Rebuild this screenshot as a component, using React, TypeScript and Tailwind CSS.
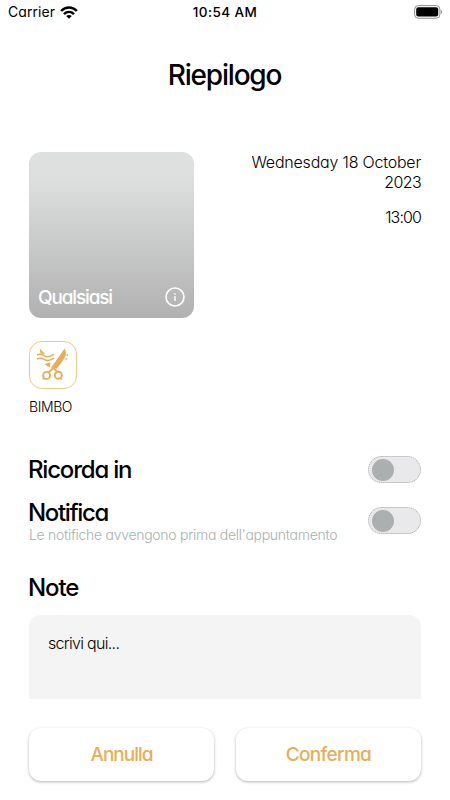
import { useState } from "react";

function StatusBar() {
  return (
    <header className="flex h-6 items-center px-2 font-['Inter'] text-black">
      <div className="flex flex-1 items-center gap-[5px]">
        <span className="text-[14px] leading-6 tracking-[0.05px]">Carrier</span>
        <svg width="18" height="13" viewBox="0 0 18 13" fill="none" stroke="#000" strokeWidth="2.5">
          <path d="M1.1 5C5.6.4 12.4.4 16.9 5" />
          <path d="M4 8.2C6.9 5.4 11.1 5.4 14 8.2" />
          <path d="M9 12.8 6.2 10.1C7.8 8.7 10.2 8.7 11.8 10.1Z" fill="#000" stroke="none" />
        </svg>
      </div>
      <span className="text-[13.5px] leading-6 font-medium tracking-[0.4px]">10:54 AM</span>
      <div className="flex flex-1 justify-end">
        <svg width="28" height="14" viewBox="0 0 28 14" fill="none">
          <rect x="0.6" y="0.6" width="25.3" height="12.6" rx="3.6" stroke="#8c8c8c" />
          <rect x="2.2" y="2.2" width="22" height="9.3" rx="2" fill="#000" />
          <path d="M26.9 4.8C28.3 5.6 28.3 8.2 26.9 9Z" fill="#8c8c8c" />
        </svg>
      </div>
    </header>
  );
}

function ScissorsIcon() {
  return (
    <svg width="48" height="48" viewBox="0 0 48 48" fill="none" stroke="#e8ae57" strokeWidth="1.5">
      <path d="M10.7 7.6 16.4 13.2 11.4 12.2Z" fill="#e8ae57" stroke="none" />
      <path d="M8 14.2C11.5 11.8 14 14.2 16.5 15.4S21.5 15.6 25 13.2" />
      <path d="M8 18.2C11.5 16 14 17.8 16.5 19S21.5 19.4 25 17.2" />
      <path d="M15.4 23.2 21.5 21.2 20.8 26.4Z" fill="#e8ae57" stroke="none" />
      <path d="M35.6 7.4C38 12 36.8 15.5 34.2 19L28 27.6 22.2 27.2 22.6 26Z" fill="#e8ae57" stroke="none" />
      <path d="M19.5 31.2 24.6 27 28 30.6" strokeWidth="2" />
      <circle cx="17.6" cy="34.4" r="3.5" strokeWidth="1.9" />
      <path d="M14.4 35V38.8" />
      <circle cx="29.3" cy="34.2" r="3.5" strokeWidth="1.9" />
      <path d="M31.6 36.6 32.8 38.6" strokeWidth="1.8" />
      <path d="M37.6 14.2H39.2M36.4 18H38.2" strokeWidth="1.7" />
    </svg>
  );
}

function Toggle({ label }: { label: string }) {
  const [on, setOn] = useState(false);

  return (
    <button
      type="button"
      role="switch"
      aria-checked={on}
      aria-label={label}
      onClick={() => setOn(!on)}
      className={`flex h-[27px] w-[53px] items-center rounded-full border border-dotted border-[#a9a9ab] bg-[#e9e9eb] px-[3px] ${
        on ? "justify-end" : "justify-start"
      }`}
    >
      <span className="size-[22px] rounded-full bg-[#a9b0af]" />
    </button>
  );
}

export default function App() {
  return (
    <div className="h-[800px] w-[450px] overflow-hidden bg-white font-['Inter',sans-serif] text-black [font-feature-settings:'cv11']">
      <StatusBar />
      <h1 className="mt-[33px] text-center text-[28px] leading-9 font-medium tracking-[-1.2px]">
        <span className="-ml-px">Riepilogo</span>
      </h1>

      <main className="mt-[59px] px-[29px]">
        <section className="flex justify-between">
          <div className="flex h-[166px] w-[165px] items-end justify-between rounded-xl bg-linear-to-b from-[#dee0df] from-15% to-[#b1b1b1] px-[9px] pb-2 text-white">
            <span className="text-[19px] leading-6 font-medium tracking-[-1.15px]">Qualsiasi</span>
            <svg width="20" height="20" viewBox="0 0 20 20" fill="none" stroke="#fff" className="mb-[3px]">
              <circle cx="10" cy="10" r="9" strokeWidth="1.6" />
              <path d="M10 9V14M10 6.2V7.7" strokeWidth="1.4" />
            </svg>
          </div>
          <div className="w-[180px] text-right text-[16px] leading-5 font-light tracking-[-0.2px]">
            <p>Wednesday 18 October</p>
            <p className="tracking-[-0.6px]">2023</p>
            <p className="mt-[15px] tracking-[-0.9px]">13:00</p>
          </div>
        </section>

        <section className="mt-[23px] w-12">
          <div className="size-12 rounded-[13px] border border-[#f0c78b]">
            <div className="-m-px">
              <ScissorsIcon />
            </div>
          </div>
          <p className="mt-2 text-[14px] leading-5 font-light tracking-[-0.4px]">BIMBO</p>
        </section>

        <section className="mt-[38px] flex h-[29px] items-center justify-between">
          <h2 className="-ml-px text-[24px] leading-[29px] font-medium tracking-[-1.2px]">Ricorda in</h2>
          <Toggle label="Ricorda in" />
        </section>

        <section className="mt-[14px] flex h-[46px] items-start justify-between">
          <div>
            <h2 className="-ml-px text-[24px] leading-[30px] font-medium tracking-[-1.35px]">Notifica</h2>
            <p className="-mt-px text-[14px] leading-4 font-light tracking-[-0.28px] whitespace-nowrap text-[#a9b0af]">
              Le notifiche avvengono prima dell'appuntamento
            </p>
          </div>
          <div className="mt-[9px]">
            <Toggle label="Notifica" />
          </div>
        </section>

        <h2 className="mt-[29px] -ml-px text-[24px] leading-[30px] font-medium tracking-[-1.1px]">Note</h2>
        <textarea
          placeholder="scrivi qui..."
          className="mt-3 block h-[84px] w-full resize-none rounded-t-xl bg-[#f4f4f4] px-[19px] pt-[18px] text-[16px] leading-5 font-light tracking-[-0.7px] outline-none placeholder:text-black"
        />
      </main>

      <footer className="mt-[29px] flex gap-[22px] px-[29px] text-[19px] font-medium text-[#e8ae57]">
        <button
          type="button"
          className="h-[53px] flex-1 rounded-xl bg-white pt-[2px] tracking-[-1px] shadow-[0_1px_3px_rgba(0,0,0,0.3)]"
        >
          Annulla
        </button>
        <button
          type="button"
          className="h-[53px] flex-1 rounded-xl bg-white pt-[2px] tracking-[-0.7px] shadow-[0_1px_3px_rgba(0,0,0,0.3)]"
        >
          Conferma
        </button>
      </footer>
    </div>
  );
}
